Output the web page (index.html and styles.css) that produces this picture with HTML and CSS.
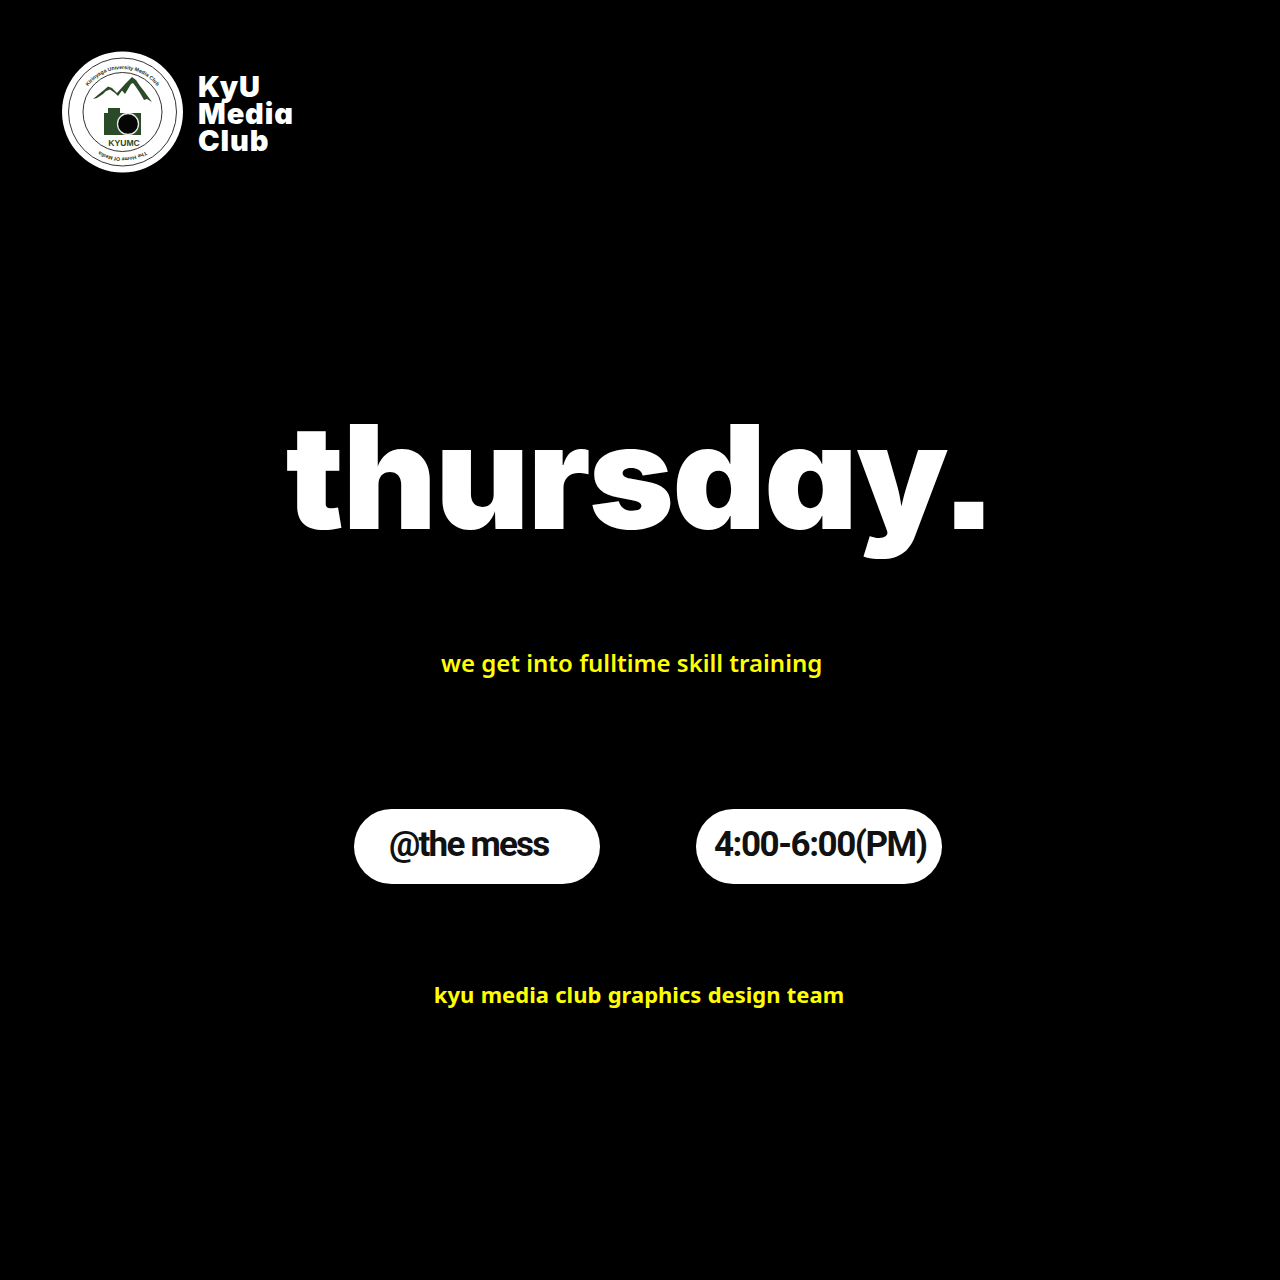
FILE: index.html
```html
<!DOCTYPE html>
<html lang="en">
<head>
<meta charset="utf-8">
<title>KyU Media Club - thursday</title>
<link rel="stylesheet" href="styles.css">
</head>
<body>
<main class="poster">
  <header class="brand">
    <svg class="logo" viewBox="0 0 124 124" width="124" height="124" aria-label="KyU Media Club logo">
      <circle cx="62.5" cy="62" r="60.5" fill="#fff"/>
      <circle cx="62.5" cy="62" r="54" fill="none" stroke="#1c1c1c" stroke-width="0.9"/>
      <circle cx="62.5" cy="62" r="39.5" fill="none" stroke="#1c1c1c" stroke-width="0.9"/>
      <defs>
        <path id="arcTop" d="M 19.5 62 A 43 43 0 0 1 105.5 62"/>
        <path id="arcBottom" d="M 108 62 A 45.5 45.5 0 0 1 17 62"/>
      </defs>
      <text class="arc-text"><textPath href="#arcTop" startOffset="50%" text-anchor="middle">Kirinyaga University Media Club</textPath></text>
      <text class="arc-text"><textPath href="#arcBottom" startOffset="50%" text-anchor="middle">The Home Of Media</textPath></text>
      <path d="M33 49 L39 44 L44 40 L48 36.5 L52 38 L57 43 L61 38.5 L66 33 L72 27 L76 30 L80 36 L84 41 L92 52 L87 49 L84 50 L80 43 L76 37 L73 33 L71 34 L68 39 L65 44 L62 40.5 L58 46 L55 43 L50 39.5 L46 41 L43 44 L37 48 Z" fill="#2b4a28"/>
      <path d="M44 63 H48 V58 H60 V63 H81 V85 H44 Z" fill="#2b4a28"/>
      <circle cx="68" cy="74" r="10.5" fill="#050505" stroke="#e8e8e8" stroke-width="1.3"/>
      <text class="kyumc" x="64" y="96" text-anchor="middle">KYUMC</text>
    </svg>
    <div class="brand-name">KyU<br>Media<br>Club</div>
  </header>
  <h1 class="title">thursday.</h1>
  <p class="tagline">we get into fulltime skill training</p>
  <div class="pills">
    <div class="pill pill-place">@the mess</div>
    <div class="pill pill-time">4:00-6:00(PM)</div>
  </div>
  <p class="credit">kyu media club graphics design team</p>
</main>
</body>
</html>
```
FILE: styles.css
```css
* { box-sizing: border-box; }
html, body { margin: 0; padding: 0; background: #000; }
.poster {
  width: 1280px;
  height: 1280px;
  background: #000;
  padding: 50px 0 0 0;
  display: flex;
  flex-direction: column;
  overflow: hidden;
}
.brand {
  display: flex;
  align-items: center;
  gap: 14px;
  margin-left: 60px;
  height: 124px;
}
.logo { display: block; flex: none; }
.arc-text { font: 700 5.2px "Liberation Sans", sans-serif; fill: #1c3018; }
.kyumc { font: 700 8.6px "Liberation Sans", sans-serif; fill: #2b4a28; }
.brand-name {
  padding-top: 2px;
  font: 900 29px/27px Inter, sans-serif;
  font-feature-settings: "cv11";
  color: #fff;
  letter-spacing: 0.9px;
}
.title {
  margin: 213px 0 0 0;
  font: 900 145px/180px Inter, sans-serif;
  font-feature-settings: "cv11", "ss07";
  color: #fff;
  text-align: center;
  letter-spacing: -1.7px;
  height: 180px;
}
.tagline {
  margin: 81px 0 0 441px;
  font: 600 24px/30px "Noto Sans", sans-serif;
  color: #ffff00;
  letter-spacing: 0;
}
.pills {
  display: flex;
  gap: 96px;
  margin: 131px 0 0 354px;
}
.pill {
  width: 246px;
  height: 75px;
  border-radius: 37.5px;
  background: #fff;
  color: #111;
  font: 700 35px/71px Roboto, sans-serif;
}
.pill-place { padding-left: 35px; letter-spacing: -1.8px; }
.pill-time { padding-left: 18px; letter-spacing: -1.47px; }
.credit {
  margin: 95px 0 0 0;
  padding-right: 2px;
  font: 700 22px/30px "Noto Sans", sans-serif;
  color: #ffff00;
  text-align: center;
  word-spacing: 0.6px;
}
```
